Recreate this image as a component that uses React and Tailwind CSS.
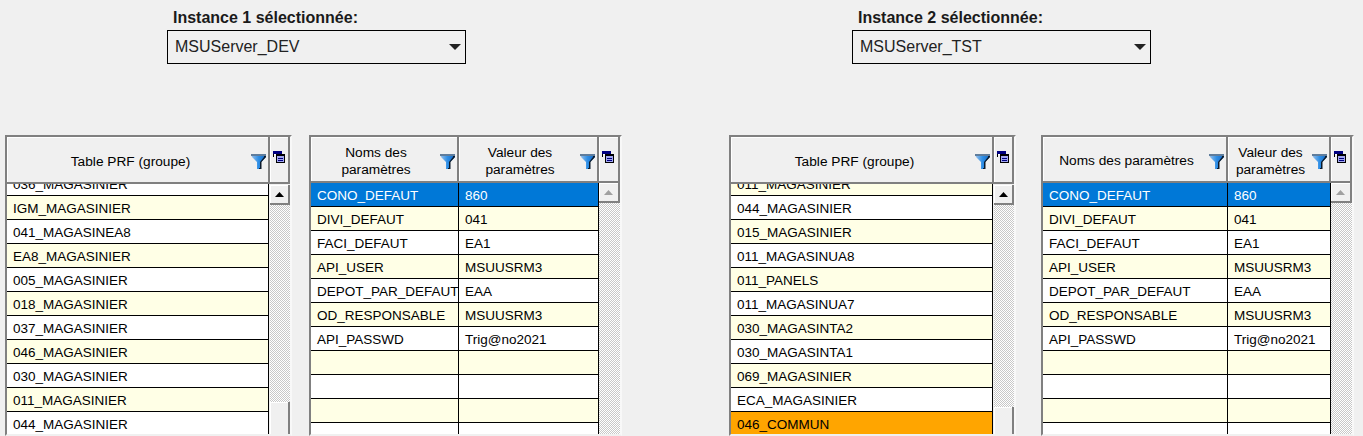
const FONT = 'font-["Liberation_Sans",Arial,sans-serif]';

const YELLOW = 'bg-[#ffffe6]';

// top-left light, bottom-right grey, like the old windows controls
function HeaderCell({ width, children, filter }) {
  return (
    <div
      className={`relative flex h-full shrink-0 items-center justify-center border-r-2 border-b-2 border-r-[#808080] border-b-[#808080] bg-[#f0f0f0] pt-[3px] text-center text-[13.7px] leading-[17px] text-black shadow-[inset_1px_1px_0_#fff] ${width}`}
    >
      {children}
      {filter && <FilterIcon />}
    </div>
  );
}

function FilterIcon() {
  return (
    <svg width="15" height="15" viewBox="0 0 15 15" className="absolute right-[2px] top-[17px]">
      <defs>
        <linearGradient id="funnel" x1="0" x2="1" y1="0" y2="0">
          <stop offset="0" stopColor="#9fc3ea" />
          <stop offset="0.5" stopColor="#2f8fe6" />
          <stop offset="1" stopColor="#1266c4" />
        </linearGradient>
      </defs>
      <path d="M0 0H15V3L10 8V15H6V8L1 3Z" fill="url(#funnel)" />
      <path d="M0 0H15V2H0Z" fill="#5f7d9c" />
      <path d="M15 2V3L10.5 8V15H8V14H9V8L13 3V2Z" fill="#0b1a2b" />
    </svg>
  );
}

function CornerIcon() {
  return (
    <svg width="13" height="12" viewBox="0 0 13 12" shapeRendering="crispEdges" className="absolute left-[3px] top-[14px]">
      <rect x="0" y="0" width="9" height="3" fill="#000080" />
      <rect x="0" y="3" width="1" height="3" fill="#000" />
      <rect x="1" y="3" width="3" height="1" fill="#fff" />
      <rect x="3" y="3" width="9" height="9" fill="#000" />
      <rect x="4" y="5" width="7" height="6" fill="#a3a8f0" />
      <rect x="5" y="7" width="5" height="1" fill="#000080" />
      <rect x="5" y="9" width="5" height="1" fill="#000080" />
    </svg>
  );
}

function Scrollbar({ disabled, thumbTop, width }) {
  return (
    <div className={`flex shrink-0 flex-col ${width}`}>
      <div className="flex h-[20px] shrink-0 items-center justify-center border-r-2 border-b-2 border-r-[#808080] border-b-[#808080] bg-[#f0f0f0] shadow-[inset_1px_1px_0_#fff]">
        <svg width="9" height="5" viewBox="0 0 9 5">
          <path d="M4.5 0L9 5H0Z" fill={disabled ? '#a0a0a0' : '#000'} />
        </svg>
      </div>
      <div
        className="shrink-0 bg-[repeating-conic-gradient(#c8c8c8_0_25%,#ffffff_0_50%)] bg-[length:2px_2px]"
        style={{ height: thumbTop }}
      />
      <div className="h-[200px] shrink-0 border-r-2 border-r-[#808080] bg-[#f0f0f0] shadow-[inset_1px_1px_0_#fff]" />
    </div>
  );
}

function Row({ cells, widths, bg, selected, clipped }) {
  return (
    <div className={`flex shrink-0 border-b border-black ${clipped} ${bg} ${selected ? 'text-white' : 'text-black'} items-end`}>
      {cells.map((c, i) => (
        <div
          key={i}
          className={`flex h-[23px] shrink-0 items-center overflow-hidden whitespace-nowrap border-r border-black pl-[6px] pt-[3px] text-[13.5px] ${widths[i]}`}
        >
          {c}
        </div>
      ))}
    </div>
  );
}

// single column table with a partly scrolled first row
function GroupTable({ first, firstBg, rows, thumbTop }) {
  return (
    <div className="flex h-[301px] w-[287px] shrink-0 flex-col overflow-hidden border-2 border-t-[#808080] border-l-[#808080] border-r-[#f8f8f8] border-b-transparent">
      <div className="flex h-[47px] shrink-0">
        <HeaderCell width="w-[263px]" filter>
          <span className="mr-[14px]">Table PRF (groupe)</span>
        </HeaderCell>
        <div className="relative h-[47px] w-[20px] shrink-0 border-r-2 border-b-2 border-r-[#808080] border-b-[#808080] shadow-[inset_1px_1px_0_#fff]">
          <CornerIcon />
        </div>
      </div>
      <div className="flex min-h-0 flex-1">
        <div className="flex w-[263px] shrink-0 flex-col pr-[1px]">
          <Row cells={[first]} widths={['w-[262px]']} bg={firstBg} clipped="h-[12px]" />
          {rows.map((r) => (
            <Row key={r.name} cells={[r.name]} widths={['w-[262px]']} bg={r.bg} clipped="h-[24px]" />
          ))}
        </div>
        <div className="pt-[1px]">
          <Scrollbar thumbTop={thumbTop} width="w-[20px]" />
        </div>
      </div>
    </div>
  );
}

function ParamTable({ col1, col2, head1, head2 }) {
  const params = [
    ['CONO_DEFAUT', '860'],
    ['DIVI_DEFAUT', '041'],
    ['FACI_DEFAUT', 'EA1'],
    ['API_USER', 'MSUUSRM3'],
    ['DEPOT_PAR_DEFAUT', 'EAA'],
    ['OD_RESPONSABLE', 'MSUUSRM3'],
    ['API_PASSWD', 'Trig@no2021'],
    ['', ''],
    ['', ''],
    ['', ''],
    ['', ''],
  ];
  return (
    <div className="flex h-[301px] w-[313px] shrink-0 flex-col overflow-hidden border-2 border-t-[#808080] border-l-[#808080] border-r-[#f8f8f8] border-b-transparent">
      <div className="flex h-[46px] shrink-0">
        <HeaderCell width={col1} filter>
          <span className="mr-[16px]">{head1}</span>
        </HeaderCell>
        <HeaderCell width={col2} filter>
          <span className="mr-[16px]">{head2}</span>
        </HeaderCell>
        <div className="relative h-[46px] w-[21px] shrink-0 border-r-2 border-b-2 border-r-[#808080] border-b-[#808080] shadow-[inset_1px_1px_0_#fff]">
          <CornerIcon />
        </div>
      </div>
      <div className="flex min-h-0 flex-1">
        <div className="flex w-[288px] shrink-0 flex-col">
          {params.map((p, i) => (
            <Row
              key={i}
              cells={p}
              widths={[col1, col2]}
              selected={i === 0}
              bg={i === 0 ? 'bg-[#0078d7]' : i % 2 ? YELLOW : 'bg-white'}
              clipped="h-[24px]"
            />
          ))}
        </div>
        <Scrollbar disabled thumbTop={260} width="w-[21px]" />
      </div>
    </div>
  );
}

function InstanceSelect({ label, value, className }) {
  return (
    <div className={`flex w-[299px] shrink-0 flex-col ${className}`}>
      <div className="h-[30px] pl-[6px] pt-[9px] text-[16px] font-bold leading-[18px] text-[#1a1a1a]">{label}</div>
      <div className="flex h-[34px] items-center justify-between border border-black pl-[7px] pr-[4px] text-[16px] text-[#222]">
        <span>{value}</span>
        <svg width="12" height="6" viewBox="0 0 12 6">
          <path d="M0 0H12L6 6Z" fill="#222" />
        </svg>
      </div>
    </div>
  );
}

const Y = YELLOW;
const W = 'bg-white';

const GROUPS_1 = [
  { name: 'IGM_MAGASINIER', bg: Y },
  { name: '041_MAGASINEA8', bg: W },
  { name: 'EA8_MAGASINIER', bg: Y },
  { name: '005_MAGASINIER', bg: W },
  { name: '018_MAGASINIER', bg: Y },
  { name: '037_MAGASINIER', bg: W },
  { name: '046_MAGASINIER', bg: Y },
  { name: '030_MAGASINIER', bg: W },
  { name: '011_MAGASINIER', bg: Y },
  { name: '044_MAGASINIER', bg: W },
];

const GROUPS_2 = [
  { name: '044_MAGASINIER', bg: W },
  { name: '015_MAGASINIER', bg: Y },
  { name: '011_MAGASINUA8', bg: W },
  { name: '011_PANELS', bg: Y },
  { name: '011_MAGASINUA7', bg: W },
  { name: '030_MAGASINTA2', bg: Y },
  { name: '030_MAGASINTA1', bg: W },
  { name: '069_MAGASINIER', bg: Y },
  { name: 'ECA_MAGASINIER', bg: W },
  { name: '046_COMMUN', bg: 'bg-[#ffa500]' },
];

export default function App() {
  return (
    <div className={`h-[436px] w-[1363px] overflow-hidden bg-[#f0f0f0] ${FONT}`}>
      <div className="flex h-[135px] items-start">
        <InstanceSelect label="Instance 1 sélectionnée:" value="MSUServer_DEV" className="ml-[167px]" />
        <InstanceSelect label="Instance 2 sélectionnée:" value="MSUServer_TST" className="ml-[386px]" />
      </div>
      <div className="flex">
        <div className="ml-[5px]">
          <GroupTable first="036_MAGASINIER" firstBg={W} rows={GROUPS_1} thumbTop={197} />
        </div>
        <div className="ml-[17px]">
          <ParamTable
            head1={<>Noms des<br />paramètres</>}
            head2={<>Valeur des<br />paramètres</>}
            col1="w-[148px]"
            col2="w-[140px]"
          />
        </div>
        <div className="ml-[107px]">
          <GroupTable first="011_MAGASINIER" firstBg={Y} rows={GROUPS_2} thumbTop={202} />
        </div>
        <div className="ml-[25px]">
          <ParamTable
            head1="Noms des paramètres"
            head2={<>Valeur des<br />paramètres</>}
            col1="w-[185px]"
            col2="w-[103px]"
          />
        </div>
      </div>
    </div>
  );
}
